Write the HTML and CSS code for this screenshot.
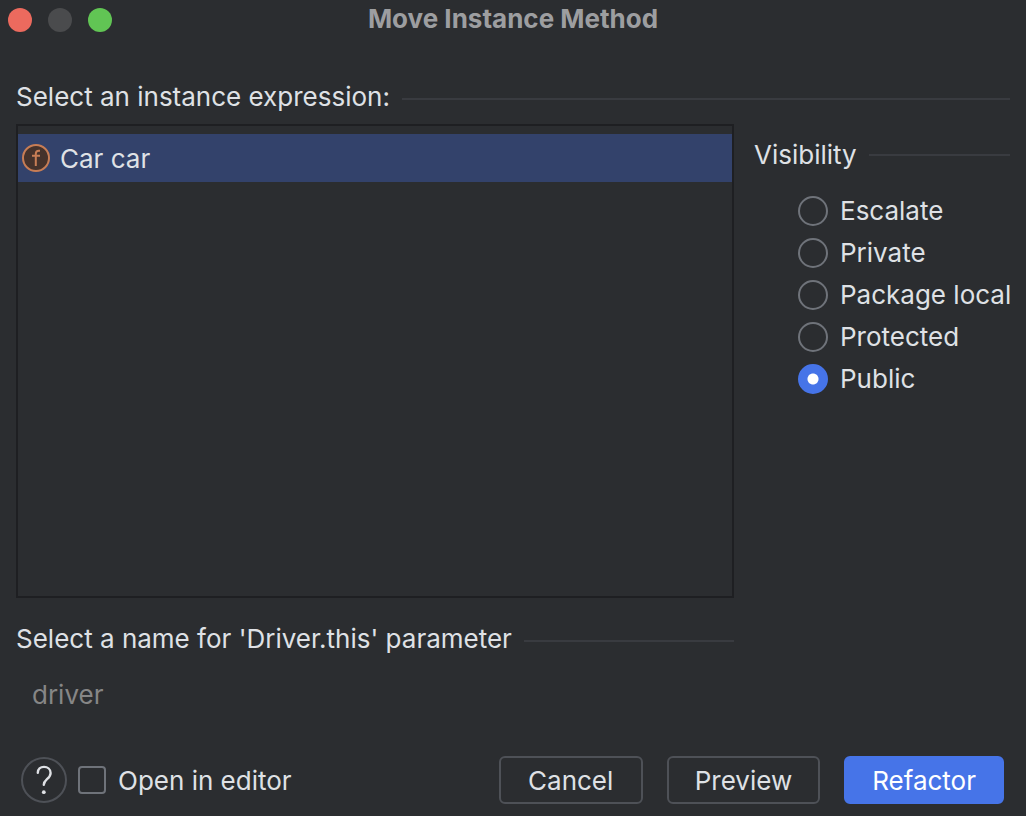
FILE: index.html
```html
<!DOCTYPE html>
<html lang="en">
<head>
<meta charset="utf-8">
<title>Move Instance Method</title>
<link rel="stylesheet" href="styles.css">
</head>
<body>
<form class="dialog">
  <header class="titlebar">
    <div class="lights">
      <button type="button" class="light light-close" aria-label="Close"></button>
      <button type="button" class="light light-minimize" aria-label="Minimize" disabled></button>
      <button type="button" class="light light-zoom" aria-label="Zoom"></button>
    </div>
    <h1 class="title">Move Instance Method</h1>
  </header>

  <main class="content">
    <h2 class="section-title" id="expression-label">Select an instance expression:</h2>
    <div class="columns">
      <div class="left">
        <ul class="list" role="listbox" aria-labelledby="expression-label">
          <li class="item" role="option" aria-selected="true">
            <svg class="field-icon" viewBox="0 0 28 28" aria-hidden="true">
              <circle cx="14" cy="14" r="13" fill="#45322b" stroke="#c77d55" stroke-width="2"/>
              <path d="M18 6.800H16.800Q13.800 6.800 13.800 9.800V22M10 11.800H18" fill="none" stroke="#c77d55" stroke-width="2"/>
            </svg>
            <span class="item-text">Car car</span>
          </li>
        </ul>
        <h2 class="section-title"><label for="parameter-name">Select a name for 'Driver.this' parameter</label></h2>
        <input class="name-input" id="parameter-name" type="text" value="driver" disabled>
      </div>
      <fieldset class="visibility">
        <legend class="legend"><span class="section-title">Visibility</span></legend>
        <div class="options">
          <label class="option"><input class="radio" type="radio" name="visibility"><span>Escalate</span></label>
          <label class="option"><input class="radio" type="radio" name="visibility"><span>Private</span></label>
          <label class="option"><input class="radio" type="radio" name="visibility"><span>Package local</span></label>
          <label class="option"><input class="radio" type="radio" name="visibility"><span>Protected</span></label>
          <label class="option"><input class="radio" type="radio" name="visibility" checked><span>Public</span></label>
        </div>
      </fieldset>
    </div>
  </main>

  <footer class="footer">
    <button type="button" class="help" aria-label="Help">
      <svg class="help-icon" viewBox="0 0 46 46" aria-hidden="true">
        <path d="M16.800 15.800C16.800 12.200 19.400 9.900 23 9.900S29.600 12.300 29.600 15.900C29.600 18.900 28 20.400 26 22.200C23.800 24.200 22.800 25.300 22.800 27.800" fill="none" stroke="#dfe1e5" stroke-width="2.400" stroke-linecap="round"/>
        <circle cx="22.800" cy="35.200" r="1.900" fill="#dfe1e5"/>
      </svg>
    </button>
    <label class="editor-option"><input class="checkbox" type="checkbox"><span class="item-text">Open in editor</span></label>
    <div class="actions">
      <button type="button" class="button">Cancel</button>
      <button type="button" class="button">Preview</button>
      <button type="submit" class="button button-primary">Refactor</button>
    </div>
  </footer>
</form>
</body>
</html>
```
FILE: styles.css
```css
* {
  box-sizing: border-box;
}

body {
  margin: 0;
  background: #2b2d30;
  color: #dfe1e5;
  font-family: Inter, "Liberation Sans", sans-serif;
  font-size: 26px;
  line-height: 32px;
}

button,
input {
  margin: 0;
  padding: 0;
  font: inherit;
  color: inherit;
}

.dialog {
  display: flex;
  flex-direction: column;
  min-height: 100vh;
}

.titlebar {
  display: grid;
  grid-template-columns: 1fr auto 1fr;
  align-items: center;
  height: 40px;
  padding: 0 8px;
}

.lights {
  display: flex;
  gap: 16px;
}

.light {
  width: 24px;
  height: 24px;
  border: 0;
  border-radius: 50%;
}

.light-close {
  background: #ec6a5e;
}

.light-minimize {
  background: #4a4b4d;
}

.light-zoom {
  background: #61c554;
}

.title {
  margin: 0;
  padding-bottom: 2px;
  color: #9d9ea0;
  font-size: 26px;
  font-weight: 700;
}

.content {
  display: flex;
  flex: 1;
  flex-direction: column;
  padding: 41px 16px 0;
}

.section-title {
  display: flex;
  align-items: center;
  gap: 12px;
  margin: 0;
  font-size: 26px;
  font-weight: 400;
}

.section-title::after {
  content: "";
  flex: 1;
  height: 2px;
  margin-top: 4px;
  background: #393b40;
}

.legend .section-title::after {
  margin-top: 0;
}

.columns {
  display: flex;
  flex: 1;
  gap: 20px;
  padding-top: 11px;
}

.left {
  display: flex;
  flex: 1;
  flex-direction: column;
}

.list {
  flex: 1;
  margin: 0 0 25px;
  padding: 8px 0;
  border: 2px solid #1e1f22;
  list-style: none;
}

.item {
  display: flex;
  align-items: center;
  gap: 10px;
  height: 48px;
  padding: 0 4px;
  background: #33426b;
}

.item-text {
  padding-top: 2px;
}

.field-icon {
  width: 28px;
  height: 28px;
}

.name-input {
  width: 100%;
  height: 32px;
  margin-top: 24px;
  padding: 0 16px;
  border: 0;
  background: transparent;
  color: #868686;
}

.visibility {
  flex: 0 0 256px;
  min-width: 0;
  margin: 0;
  padding: 15px 0 0;
  border: 0;
}

.legend {
  width: 100%;
  padding: 15px 0 0;
}

.options {
  display: flex;
  flex-direction: column;
  gap: 10px;
  padding: 9px 0 0 44px;
}

.option,
.editor-option {
  display: flex;
  align-items: center;
  gap: 12px;
  white-space: nowrap;
}

.radio,
.checkbox {
  flex: none;
  appearance: none;
  border: 2px solid #6f737a;
}

.radio {
  width: 30px;
  height: 30px;
  border-radius: 50%;
}

.radio:checked {
  border-color: #4674e8;
  background: radial-gradient(circle, #fff 5px, #4674e8 6px);
}

.checkbox {
  width: 28px;
  height: 28px;
  border-radius: 4px;
}

.footer {
  display: flex;
  align-items: center;
  padding: 45px 22px 12px 21px;
}

.help {
  width: 46px;
  height: 46px;
  border: 2px solid #4e5157;
  border-radius: 50%;
  background: transparent;
}

.help-icon {
  display: block;
  width: 46px;
  height: 46px;
  margin: -2px;
}

.editor-option {
  margin-left: 11px;
}

.actions {
  display: flex;
  gap: 24px;
  margin-left: auto;
}

.button {
  min-width: 144px;
  height: 48px;
  padding: 2px 26px 0;
  border: 2px solid #4e5157;
  border-radius: 6px;
  background: transparent;
}

.button-primary {
  border-color: #4674e8;
  background: #4674e8;
  color: #fff;
}
```
